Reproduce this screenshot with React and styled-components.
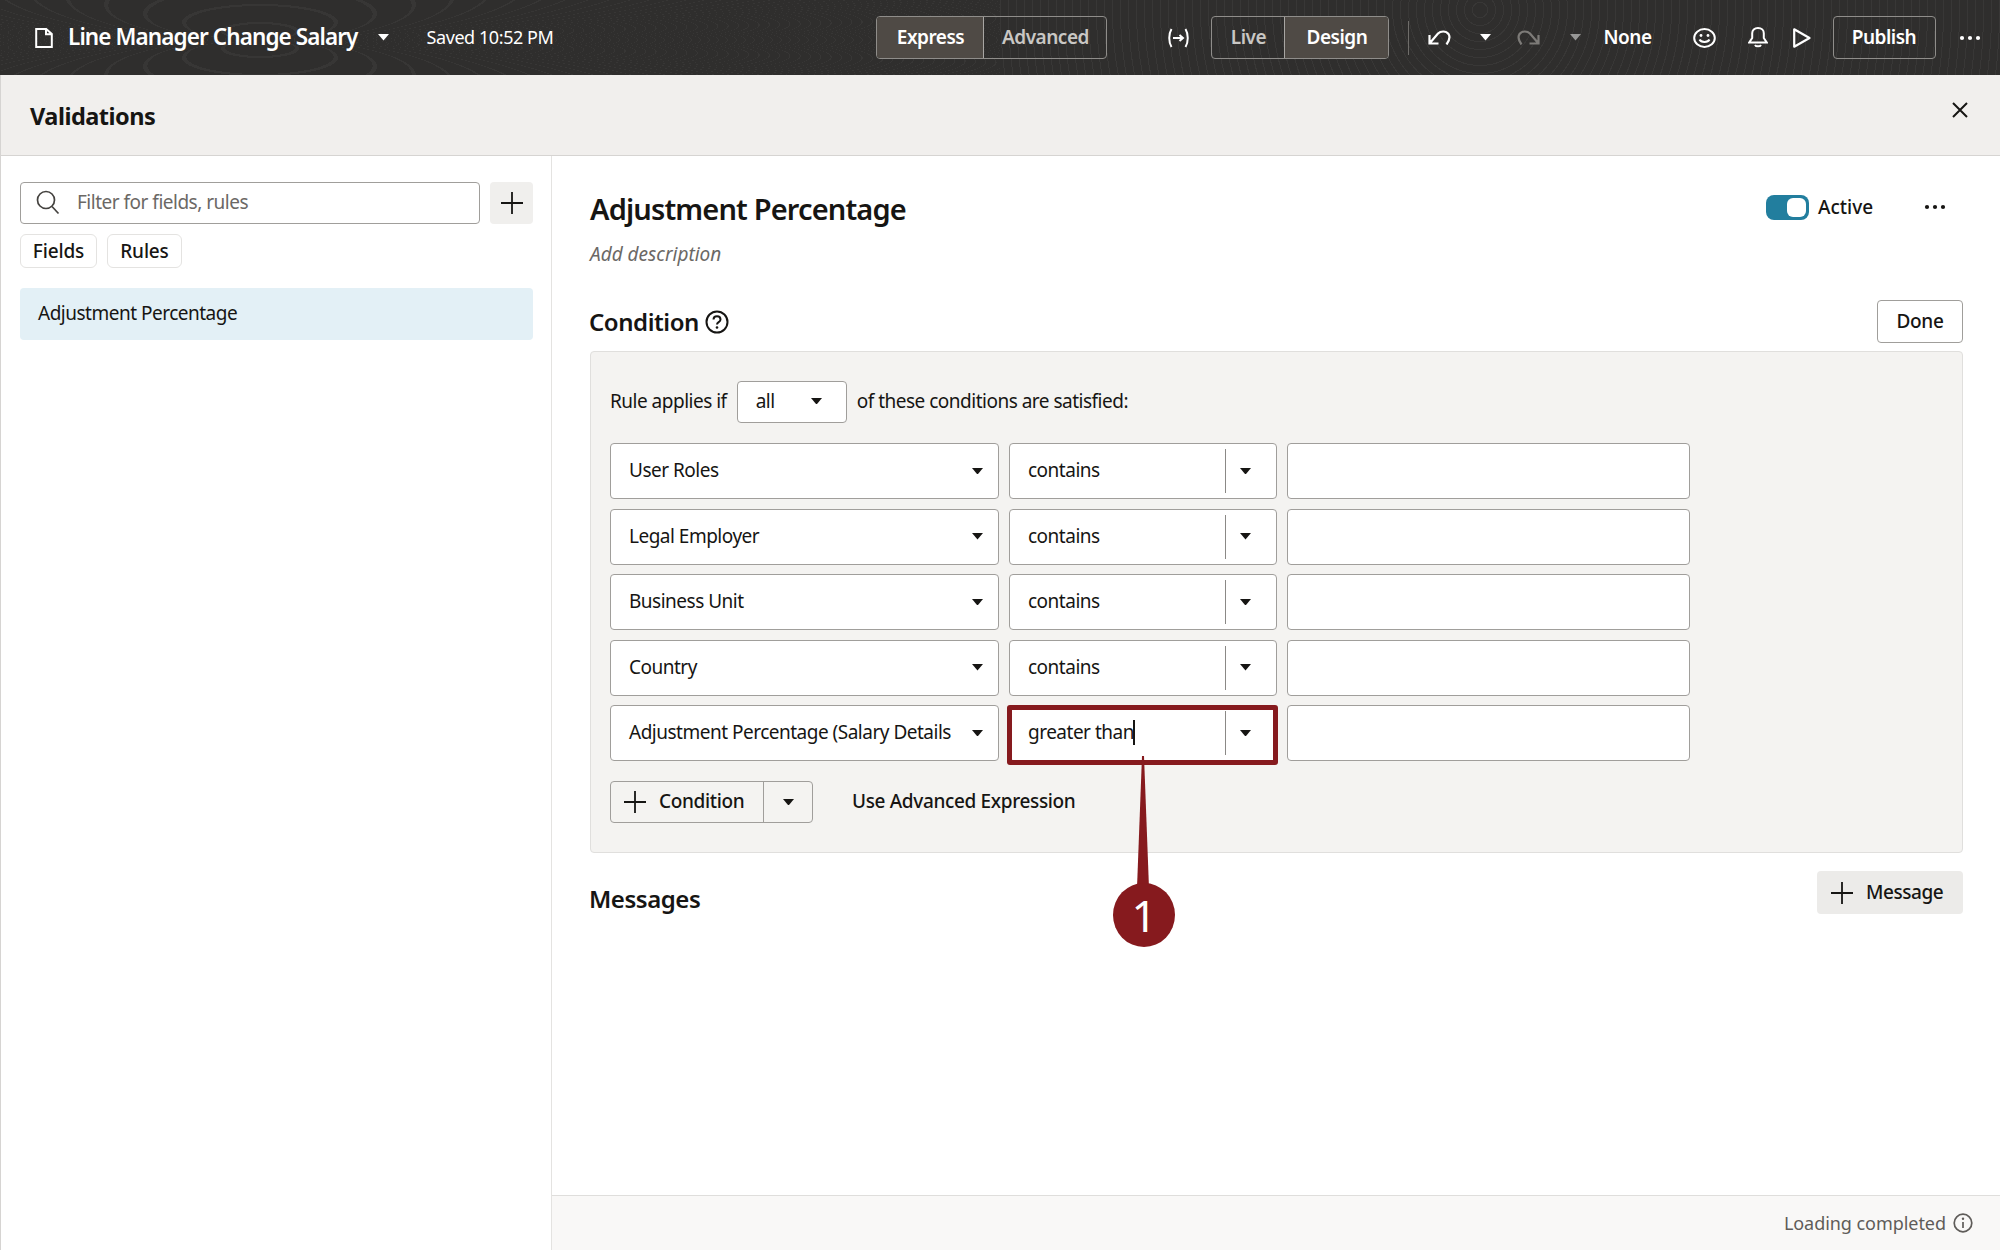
import React from "react";
import styled, { createGlobalStyle } from "styled-components";

const GlobalStyle = createGlobalStyle`
  html, body {
    margin: 0;
    padding: 0;
    background: #fff;
  }
  body {
    font-family: "Noto Sans", "Open Sans", Arial, sans-serif;
    color: #161513;
  }
`;

const Page = styled.div`
  width: 2000px;
  height: 1250px;
  display: flex;
  flex-direction: column;
  overflow: hidden;
`;

const Header = styled.header`
  height: 75px;
  flex: none;
  display: flex;
  align-items: center;
  padding-left: 35px;
  color: #fff;
  background-color: #2f2e2d;
  background-image:
    repeating-radial-gradient(circle at 480px 10px, transparent 0 7px, rgba(255, 255, 255, 0.045) 7px 8px),
    repeating-radial-gradient(ellipse at 260px 40px, transparent 0 8px, rgba(255, 255, 255, 0.04) 8px 9px);
  background-size: 1000px 75px, 1000px 75px;
  background-position: 1000px 0, 0 0;
  background-repeat: no-repeat;
`;

const AppTitle = styled.div`
  margin: 0 0 2px 15px;
  font-size: 22.5px;
  font-weight: 600;
  letter-spacing: -0.9px;
  white-space: nowrap;
`;

const SavedNote = styled.div`
  margin: 0 0 2px 38px;
  font-size: 18px;
  letter-spacing: -0.43px;
  white-space: nowrap;
`;

const Segmented = styled.div`
  margin-left: ${(p) => p.$left}px;
  height: 43px;
  display: flex;
  box-sizing: border-box;
  border: 1px solid #8f8d8a;
  border-radius: 4px;
  overflow: hidden;
`;

const Segment = styled.div`
  width: ${(p) => p.$width}px;
  padding-bottom: 2px;
  display: flex;
  align-items: center;
  justify-content: center;
  font-size: 19px;
  font-weight: 600;
  letter-spacing: -0.5px;
  color: ${(p) => (p.$on ? "#fff" : "#c9c7c4")};
  background: ${(p) => (p.$on ? "#4f4a45" : "transparent")};
  & + & {
    border-left: 1px solid #a8a6a3;
  }
`;

const IconSlot = styled.span`
  flex: none;
  display: inline-flex;
  margin-left: ${(p) => p.$left || 0}px;
  opacity: ${(p) => p.$dim || 1};
`;

const Divider = styled.div`
  width: 1px;
  height: 34px;
  margin-left: 19px;
  background: #6f6d6a;
`;

const NoneLabel = styled.div`
  margin: 0 0 2px 22px;
  font-size: 19px;
  font-weight: 600;
  letter-spacing: -0.5px;
`;

const PublishButton = styled.div`
  margin-left: 22px;
  width: 103px;
  height: 43px;
  box-sizing: border-box;
  padding-bottom: 2px;
  display: flex;
  align-items: center;
  justify-content: center;
  border: 1px solid #8f8d8a;
  border-radius: 4px;
  font-size: 19px;
  font-weight: 600;
  letter-spacing: -0.5px;
`;

const TitleBar = styled.div`
  height: 81px;
  flex: none;
  box-sizing: border-box;
  padding: 2px 32px 0 29px;
  display: flex;
  align-items: center;
  justify-content: space-between;
  background: #f1efed;
  border-bottom: 1px solid #d6d4d2;
  border-left: 1px solid #d6d4d2;
`;

const BarTitle = styled.h1`
  margin: 0;
  font-size: 23.5px;
  font-weight: 700;
  letter-spacing: -0.5px;
`;

const CloseSlot = styled.span`
  display: inline-flex;
  margin-top: -12px;
`;

const Body = styled.div`
  flex: 1;
  display: flex;
  min-height: 0;
`;

const Sidebar = styled.aside`
  width: 552px;
  flex: none;
  box-sizing: border-box;
  padding: 26px 18px 0 19px;
  border-left: 1px solid #d6d4d2;
  border-right: 1px solid #e4e3e1;
`;

const SearchRow = styled.div`
  display: flex;
  gap: 10px;
`;

const SearchBox = styled.div`
  width: 460px;
  height: 42px;
  box-sizing: border-box;
  padding: 0 0 2px 15px;
  display: flex;
  align-items: center;
  gap: 17px;
  border: 1px solid #a09e9b;
  border-radius: 4px;
  font-size: 19px;
  letter-spacing: -0.5px;
  color: #6b6865;
`;

const AddButton = styled.div`
  width: 43px;
  height: 42px;
  display: flex;
  align-items: center;
  justify-content: center;
  border-radius: 4px;
  background: #f0efed;
`;

const ChipRow = styled.div`
  display: flex;
  gap: 10px;
  margin-top: 10px;
`;

const Chip = styled.div`
  width: ${(p) => p.$width}px;
  height: 34px;
  box-sizing: border-box;
  padding-bottom: 1px;
  display: flex;
  align-items: center;
  justify-content: center;
  border: 1px solid #e4e3e1;
  border-radius: 6px;
  font-size: 19px;
  font-weight: 500;
  letter-spacing: -0.15px;
`;

const ListItem = styled.div`
  margin-top: 20px;
  height: 52px;
  box-sizing: border-box;
  padding: 0 0 2px 18px;
  display: flex;
  align-items: center;
  border-radius: 4px;
  background: #e3f0f6;
  font-size: 19px;
  letter-spacing: -0.5px;
`;

const Detail = styled.main`
  flex: 1;
  min-width: 0;
  display: flex;
  flex-direction: column;
`;

const DetailScroll = styled.div`
  flex: 1;
  padding: 34px 37px 0 38px;
`;

const TitleRow = styled.div`
  height: 38px;
  display: flex;
  align-items: center;
  justify-content: space-between;
`;

const RuleName = styled.h2`
  margin: 0;
  font-size: 29px;
  font-weight: 600;
  letter-spacing: -0.85px;
  line-height: 38px;
`;

const StatusGroup = styled.div`
  display: flex;
  align-items: center;
  padding-right: 17px;
  margin-top: -4px;
`;

const Toggle = styled.div`
  width: 43px;
  height: 25px;
  box-sizing: border-box;
  padding: 3px;
  display: flex;
  justify-content: flex-end;
  border-radius: 8px;
  background: #227e9e;
`;

const ToggleKnob = styled.div`
  width: 19px;
  height: 19px;
  border-radius: 6px;
  background: #fff;
`;

const ActiveLabel = styled.div`
  margin-left: 9px;
  width: 106px;
  font-size: 19px;
  font-weight: 500;
`;

const Description = styled.div`
  margin-top: 14px;
  font-size: 19px;
  line-height: 24px;
  font-style: italic;
  letter-spacing: 0;
  color: #6b6865;
`;

const SectionRow = styled.div`
  margin-top: ${(p) => p.$top}px;
  display: flex;
  justify-content: space-between;
  align-items: ${(p) => p.$align || "center"};
`;

const SectionTitle = styled.h3`
  margin: ${(p) => p.$top || 0}px 0 0 -1px;
  font-size: 24px;
  font-weight: 600;
  line-height: 30px;
  letter-spacing: -0.45px;
  display: flex;
  align-items: center;
  gap: 6px;
`;

const DoneButton = styled.div`
  width: 86px;
  height: 43px;
  box-sizing: border-box;
  padding-bottom: 2px;
  display: flex;
  align-items: center;
  justify-content: center;
  background: #fff;
  border: 1px solid #a09e9b;
  border-radius: 4px;
  font-size: 19px;
  font-weight: 500;
  letter-spacing: -0.3px;
`;

const ConditionPanel = styled.section`
  margin-top: 8px;
  height: 502px;
  box-sizing: border-box;
  padding: 29px 19px;
  background: #f4f3f1;
  border: 1px solid #e0dfdd;
  border-radius: 4px;
`;

const RuleLine = styled.div`
  display: flex;
  align-items: center;
  height: 42px;
  font-size: 19px;
  letter-spacing: -0.5px;
`;

const RuleText = styled.span`
  margin-top: -2px;
`;

const AllSelect = styled.div`
  margin: 0 10px;
  width: 110px;
  height: 42px;
  box-sizing: border-box;
  padding: 0 24px 2px 18px;
  display: flex;
  align-items: center;
  justify-content: space-between;
  background: #fff;
  border: 1px solid #a09e9b;
  border-radius: 4px;
`;

const Rows = styled.div`
  margin-top: 20px;
  display: flex;
  flex-direction: column;
  gap: 9.5px;
`;

const Row = styled.div`
  display: flex;
  gap: 10px;
`;

const Field = styled.div`
  position: relative;
  width: ${(p) => p.$width}px;
  height: 56px;
  flex: none;
  box-sizing: border-box;
  display: flex;
  align-items: center;
  background: #fff;
  border: 1px solid #a09e9b;
  border-radius: 4px;
  font-size: 19px;
  letter-spacing: -0.5px;
  white-space: nowrap;
`;

const FieldText = styled.div`
  flex: 1;
  padding: 0 0 2px ${(p) => p.$pad}px;
`;

const TextCursor = styled.span`
  display: inline-block;
  width: 2px;
  height: 25px;
  margin-left: -1px;
  background: #161513;
  vertical-align: -6px;
`;

const CaretBox = styled.div`
  flex: none;
  width: 42px;
  display: flex;
  justify-content: center;
`;

const ComboCaret = styled.div`
  flex: none;
  width: 51px;
  height: 44px;
  box-sizing: border-box;
  padding-right: 11px;
  display: flex;
  align-items: center;
  justify-content: center;
  border-left: 1px solid #8b8986;
`;

const Highlight = styled.div`
  position: absolute;
  left: -3px;
  top: -1px;
  width: 271px;
  height: 60px;
  box-sizing: border-box;
  border: 5.5px solid #861a1e;
  border-radius: 3px;
  pointer-events: none;
`;

const CalloutStem = styled.svg`
  position: absolute;
  left: 121px;
  top: 50px;
`;

const CalloutBadge = styled.div`
  position: absolute;
  left: 103px;
  top: 177px;
  width: 62px;
  height: 64px;
  display: flex;
  align-items: center;
  justify-content: center;
  border-radius: 50%;
  background: #861a1e;
  color: #fff;
  font-size: 44px;
  font-weight: 400;
  letter-spacing: 0;
`;

const ActionRow = styled.div`
  margin-top: 20px;
  display: flex;
  align-items: center;
`;

const SplitButton = styled.div`
  width: 203px;
  height: 42px;
  box-sizing: border-box;
  display: flex;
  border: 1px solid #a09e9b;
  border-radius: 4px;
`;

const SplitMain = styled.div`
  width: 153px;
  box-sizing: border-box;
  padding-left: 13px;
  display: flex;
  align-items: center;
  gap: 13px;
  border-right: 1px solid #a09e9b;
  font-size: 19px;
  font-weight: 500;
  letter-spacing: -0.35px;
`;

const ButtonLabel = styled.span`
  margin-top: -2px;
`;

const SplitCaret = styled.div`
  flex: 1;
  display: flex;
  align-items: center;
  justify-content: center;
`;

const LinkAction = styled.div`
  margin: 0 0 2px 39px;
  font-size: 19px;
  font-weight: 500;
  letter-spacing: -0.35px;
`;

const MessageButton = styled.div`
  width: 146px;
  height: 43px;
  box-sizing: border-box;
  padding-left: 14px;
  display: flex;
  align-items: center;
  gap: 13px;
  border-radius: 4px;
  background: #ecebe9;
  font-size: 19px;
  font-weight: 500;
  letter-spacing: -0.45px;
`;

const Footer = styled.footer`
  height: 55px;
  flex: none;
  box-sizing: border-box;
  padding-right: 27px;
  display: flex;
  align-items: center;
  justify-content: flex-end;
  gap: 7px;
  background: #f9f8f7;
  border-top: 1px solid #dfdedc;
  color: #5f5c59;
  font-size: 18px;
  letter-spacing: -0.05px;
`;

const Caret = ({ color = "#161513", size = 11 }) => (
  <svg width={size} height={size * 0.6} viewBox="0 0 10 6">
    <path d="M0 0h10L5 6z" fill={color} />
  </svg>
);

const Plus = ({ size = 22 }) => (
  <svg width={size} height={size} viewBox="0 0 22 22" fill="none" stroke="#161513" strokeWidth="1.8">
    <path d="M11 0v22M0 11h22" />
  </svg>
);

const Dots = ({ color }) => (
  <svg width="22" height="6" viewBox="0 0 22 6" fill={color}>
    <circle cx="3" cy="3" r="2.1" />
    <circle cx="11" cy="3" r="2.1" />
    <circle cx="19" cy="3" r="2.1" />
  </svg>
);

const DocIcon = () => (
  <svg width="18" height="20" viewBox="0 0 18 20" fill="none" stroke="#fff" strokeWidth="2">
    <path d="M1.2 1h10l5.600 5v13H1.200zM11 1.300v5h5.500" />
  </svg>
);

const FunctionIcon = () => (
  <svg width="23" height="20" viewBox="0 0 23 20" fill="none" stroke="#fff" strokeWidth="2">
    <path d="M4.500 1C1.500 6 1.500 14 4.500 19M18.500 1C21.500 6 21.500 14 18.500 19M6 10h10M12.500 7l3.500 3-3.500 3" />
  </svg>
);

const UndoIcon = () => (
  <svg width="23" height="15" viewBox="0 0 23 15" fill="none" stroke="#fff" strokeWidth="2.2">
    <path d="M1.500 5v8.500h9M1.500 13.500L10 3.500C12.500 1 18 .5 20.500 4 22.500 7 21 11 18.500 14.500" />
  </svg>
);

const RedoIcon = () => (
  <svg width="23" height="15" viewBox="0 0 23 15" fill="none" stroke="#7d7b78" strokeWidth="2.2">
    <path d="M21.500 5v8.500h-9M21.500 13.500L13 3.500C10.500 1 5 .5 2.500 4 .5 7 2 11 4.500 14.500" />
  </svg>
);

const SmileIcon = () => (
  <svg width="23" height="20" viewBox="0 0 23 20" fill="none" stroke="#fff" strokeWidth="2">
    <ellipse cx="11.500" cy="10" rx="10.300" ry="8.900" />
    <path d="M6.500 11.500c1.500 3.200 8.500 3.200 10 0" />
    <circle cx="8" cy="7.500" r="1.400" fill="#fff" stroke="none" />
    <circle cx="15" cy="7.500" r="1.400" fill="#fff" stroke="none" />
  </svg>
);

const BellIcon = () => (
  <svg width="20" height="21" viewBox="0 0 20 21" fill="none" stroke="#fff" strokeWidth="2">
    <path d="M10 1c-3.600 0-5.800 2.300-5.800 5.200v4.800L1.200 15.500h17.600l-3-4.500V6.200C15.800 3.300 13.600 1 10 1z" />
    <path d="M7 18c1 1.800 5 1.800 6 0" />
  </svg>
);

const PlayIcon = () => (
  <svg width="18" height="20" viewBox="0 0 18 20" fill="none" stroke="#fff" strokeWidth="2.200">
    <path d="M1.200 1.300v17.400L16.500 10z" strokeLinejoin="round" />
  </svg>
);

const CloseIcon = () => (
  <svg width="16" height="16" viewBox="0 0 16 16" stroke="#161513" strokeWidth="2">
    <path d="M1 1l14 14M15 1L1 15" />
  </svg>
);

const SearchIcon = () => (
  <svg width="24" height="25" viewBox="0 0 24 25" fill="none" stroke="#44423f" strokeWidth="1.700">
    <circle cx="10" cy="10" r="8.500" />
    <path d="M16 16.500l6.500 7" />
  </svg>
);

const HelpIcon = () => (
  <svg width="24" height="24" viewBox="0 0 24 24" fill="none" stroke="#161513" strokeWidth="2">
    <circle cx="12" cy="12" r="10.500" />
    <path d="M8.500 9.500c0-4.500 7-4.500 7 0 0 2.800-3.500 2.500-3.500 5" />
    <circle cx="12" cy="17.500" r="1.300" fill="#161513" stroke="none" />
  </svg>
);

const InfoIcon = () => (
  <svg width="20" height="20" viewBox="0 0 20 20" fill="none" stroke="#5f5c59" strokeWidth="1.700">
    <circle cx="10" cy="10" r="8.800" />
    <path d="M10 9v6" />
    <circle cx="10" cy="5.800" r="1.200" fill="#5f5c59" stroke="none" />
  </svg>
);

const conditions = [
  { field: "User Roles", operator: "contains" },
  { field: "Legal Employer", operator: "contains" },
  { field: "Business Unit", operator: "contains" },
  { field: "Country", operator: "contains" },
  { field: "Adjustment Percentage (Salary Details", operator: "greater than", focused: true },
];

function ConditionRow({ field, operator, focused }) {
  return (
    <Row>
      <Field $width={389}>
        <FieldText $pad={18}>{field}</FieldText>
        <CaretBox>
          <Caret />
        </CaretBox>
      </Field>
      <Field $width={268}>
        <FieldText $pad={18}>
          {operator}
          {focused && <TextCursor />}
        </FieldText>
        <ComboCaret>
          <Caret />
        </ComboCaret>
        {focused && (
          <>
            <Highlight />
            <CalloutStem width="24" height="132" viewBox="0 0 24 132">
              <path d="M11 0h2L18 132H6z" fill="#861a1e" />
            </CalloutStem>
            <CalloutBadge>1</CalloutBadge>
          </>
        )}
      </Field>
      <Field $width={403} />
    </Row>
  );
}

export default function App() {
  return (
    <Page>
      <GlobalStyle />
      <Header>
        <DocIcon />
        <AppTitle>Line Manager Change Salary</AppTitle>
        <IconSlot $left={20}>
          <Caret color="#fff" />
        </IconSlot>
        <SavedNote>Saved 10:52 PM</SavedNote>
        <Segmented $left={323}>
          <Segment $width={106} $on>
            Express
          </Segment>
          <Segment $width={122}>Advanced</Segment>
        </Segmented>
        <IconSlot $left={60}>
          <FunctionIcon />
        </IconSlot>
        <Segmented $left={21}>
          <Segment $width={72}>Live</Segment>
          <Segment $width={103} $on>
            Design
          </Segment>
        </Segmented>
        <Divider />
        <IconSlot $left={19}>
          <UndoIcon />
        </IconSlot>
        <IconSlot $left={29}>
          <Caret color="#fff" />
        </IconSlot>
        <IconSlot $left={26}>
          <RedoIcon />
        </IconSlot>
        <IconSlot $left={30} $dim={0.5}>
          <Caret color="#fff" />
        </IconSlot>
        <NoneLabel>None</NoneLabel>
        <IconSlot $left={41}>
          <SmileIcon />
        </IconSlot>
        <IconSlot $left={32}>
          <BellIcon />
        </IconSlot>
        <IconSlot $left={25}>
          <PlayIcon />
        </IconSlot>
        <PublishButton>Publish</PublishButton>
        <IconSlot $left={23}>
          <Dots color="#fff" />
        </IconSlot>
      </Header>
      <TitleBar>
        <BarTitle>Validations</BarTitle>
        <CloseSlot>
          <CloseIcon />
        </CloseSlot>
      </TitleBar>
      <Body>
        <Sidebar>
          <SearchRow>
            <SearchBox>
              <SearchIcon />
              Filter for fields, rules
            </SearchBox>
            <AddButton>
              <Plus />
            </AddButton>
          </SearchRow>
          <ChipRow>
            <Chip $width={77}>Fields</Chip>
            <Chip $width={75}>Rules</Chip>
          </ChipRow>
          <ListItem>Adjustment Percentage</ListItem>
        </Sidebar>
        <Detail>
          <DetailScroll>
            <TitleRow>
              <RuleName>Adjustment Percentage</RuleName>
              <StatusGroup>
                <Toggle>
                  <ToggleKnob />
                </Toggle>
                <ActiveLabel>Active</ActiveLabel>
                <Dots color="#161513" />
              </StatusGroup>
            </TitleRow>
            <Description>Add description</Description>
            <SectionRow $top={34}>
              <SectionTitle>
                Condition
                <HelpIcon />
              </SectionTitle>
              <DoneButton>Done</DoneButton>
            </SectionRow>
            <ConditionPanel>
              <RuleLine>
                <RuleText>Rule applies if</RuleText>
                <AllSelect>
                  all
                  <Caret />
                </AllSelect>
                <RuleText>of these conditions are satisfied:</RuleText>
              </RuleLine>
              <Rows>
                {conditions.map((c) => (
                  <ConditionRow key={c.field} {...c} />
                ))}
              </Rows>
              <ActionRow>
                <SplitButton>
                  <SplitMain>
                    <Plus />
                    <ButtonLabel>Condition</ButtonLabel>
                  </SplitMain>
                  <SplitCaret>
                    <Caret />
                  </SplitCaret>
                </SplitButton>
                <LinkAction>Use Advanced Expression</LinkAction>
              </ActionRow>
            </ConditionPanel>
            <SectionRow $top={18} $align="flex-start">
              <SectionTitle $top={13}>Messages</SectionTitle>
              <MessageButton>
                <Plus />
                <ButtonLabel>Message</ButtonLabel>
              </MessageButton>
            </SectionRow>
          </DetailScroll>
          <Footer>
            Loading completed
            <InfoIcon />
          </Footer>
        </Detail>
      </Body>
    </Page>
  );
}
